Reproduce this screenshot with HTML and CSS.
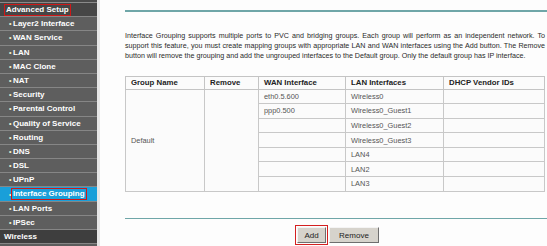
FILE: index.html
```html
<!DOCTYPE html>
<html>
<head>
<meta charset="utf-8">
<link rel="stylesheet" href="styles.css">
</head>
<body>
<div class="page">
  <nav class="side">
    <div class="top-strip"></div>
    <div class="item head"><span class="hl">Advanced Setup</span></div>
    <div class="item"><span class="b">•</span>Layer2 Interface</div>
    <div class="item"><span class="b">•</span>WAN Service</div>
    <div class="item"><span class="b">•</span>LAN</div>
    <div class="item"><span class="b">•</span>MAC Clone</div>
    <div class="item"><span class="b">•</span>NAT</div>
    <div class="item"><span class="b">•</span>Security</div>
    <div class="item"><span class="b">•</span>Parental Control</div>
    <div class="item"><span class="b">•</span>Quality of Service</div>
    <div class="item"><span class="b">•</span>Routing</div>
    <div class="item"><span class="b">•</span>DNS</div>
    <div class="item"><span class="b">•</span>DSL</div>
    <div class="item"><span class="b">•</span>UPnP</div>
    <div class="item active"><span class="b">•</span><span class="hl">Interface Grouping</span></div>
    <div class="item"><span class="b">•</span>LAN Ports</div>
    <div class="item"><span class="b">•</span>IPSec</div>
    <div class="item head dark">Wireless</div>
  </nav>
  <main class="main">
    <div class="rule"></div>
    <p class="desc">Interface Grouping supports multiple ports to PVC and bridging groups. Each group will perform as an independent network. To support this feature, you must create mapping groups with appropriate LAN and WAN interfaces using the Add button. The Remove button will remove the grouping and add the ungrouped interfaces to the Default group. Only the default group has IP interface.</p>
    <table class="grp">
      <thead>
        <tr>
          <th class="c1">Group Name</th>
          <th class="c2">Remove</th>
          <th class="c3">WAN Interface</th>
          <th class="c4">LAN Interfaces</th>
          <th class="c5">DHCP Vendor IDs</th>
        </tr>
      </thead>
      <tbody>
        <tr><td rowspan="7">Default</td><td rowspan="7"></td><td>eth0.5.600</td><td>Wireless0</td><td></td></tr>
        <tr><td>ppp0.500</td><td>Wireless0_Guest1</td><td></td></tr>
        <tr><td></td><td>Wireless0_Guest2</td><td></td></tr>
        <tr><td></td><td>Wireless0_Guest3</td><td></td></tr>
        <tr><td></td><td>LAN4</td><td></td></tr>
        <tr><td></td><td>LAN2</td><td></td></tr>
        <tr><td></td><td>LAN3</td><td></td></tr>
      </tbody>
    </table>
    <div class="rule rule2"></div>
    <div class="btns">
      <span class="mark"><button class="btn">Add</button></span>
      <button class="btn">Remove</button>
    </div>
  </main>
</div>
</body>
</html>
```

FILE: styles.css
```css
* { box-sizing: border-box; }
html, body { margin: 0; padding: 0; }
body {
  width: 547px;
  height: 246px;
  overflow: hidden;
  background: #fdfdfd;
  font-family: "Liberation Sans", Arial, sans-serif;
}
.page {
  display: flex;
  height: 246px;
}
.side {
  width: 100px;
  flex: none;
  background: #5c5c5c;
  border-right: 3px solid #e6e6e6;
  display: flex;
  flex-direction: column;
  overflow: hidden;
}
.top-strip {
  height: 3px;
  flex: none;
  background: #4a4a4a;
  border-bottom: 1px solid #8a8a8a;
}
.item {
  height: 14.2px;
  flex: none;
  display: flex;
  align-items: center;
  padding-left: 8px;
  color: #fff;
  font-weight: bold;
  font-size: 8px;
  border-bottom: 1px solid #868686;
  white-space: nowrap;
  background: #5e5e5e;
}
.item .b {
  color: #f2f0c8;
  width: 4px;
  margin-left: 1px;
  font-size: 7px;
}
.item.head {
  padding-left: 4px;
  background: #464646;
}
.item.head.dark {
  background: #3e3e3e;
  padding-left: 4px;
}
.item.active {
  background: #1a9fd9;
}
.hl {
  display: inline-block;
  border: 1.5px solid #d01818;
  padding: 0 1px;
  height: 12px;
  line-height: 9px;
}
.item.active .hl {
  margin-left: -2px;
}
.main {
  flex: 1;
  padding-left: 25px;
  padding-top: 10px;
  display: flex;
  flex-direction: column;
  min-width: 0;
}
.main > * { flex: none; }
.rule {
  height: 1.5px;
  background: #6fa6a8;
  margin-right: -2px;
}
.desc {
  margin: 19px 0 0 0;
  font-size: 7.15px;
  line-height: 10px;
  color: #2a2a2a;
  width: 420px;
  text-align: justify;
}
.grp {
  margin-top: 15px;
  width: 420px;
  border-collapse: collapse;
  font-size: 7.4px;
  color: #555;
  background: #fbfbfb;
  border: 1.5px solid #bdbdbd;
}
.grp th {
  text-align: left;
  font-weight: bold;
  color: #222;
  font-size: 7.8px;
  height: 13px;
  padding: 0 0 0 5px;
  border: 1.5px solid #c4c4c4;
}
.grp td {
  height: 14.6px;
  padding: 0 0 0 5px;
  border: 1.5px solid #c8c8c8;
  white-space: nowrap;
}
.c1 { width: 79px; }
.c2 { width: 54px; }
.c3 { width: 87px; }
.c4 { width: 98px; }
.rule2 {
  margin-top: 26px;
}
.btns {
  margin-top: 8px;
  display: flex;
  align-items: center;
  padding-left: 172px;
}
.mark {
  outline: 1.5px solid #d42020;
  outline-offset: 1px;
  display: flex;
}
.btn {
  font-family: "Liberation Sans", Arial, sans-serif;
  font-size: 8px;
  color: #222;
  background: #d6d3cc;
  border: 1px solid;
  border-color: #f4f4f4 #6e6e6e #6e6e6e #f4f4f4;
  height: 16px;
  padding: 0 6px;
  margin: 0;
}
.mark .btn { width: 29px; padding: 0; }
.btns > .btn { width: 50px; margin-left: 3px; }
```
